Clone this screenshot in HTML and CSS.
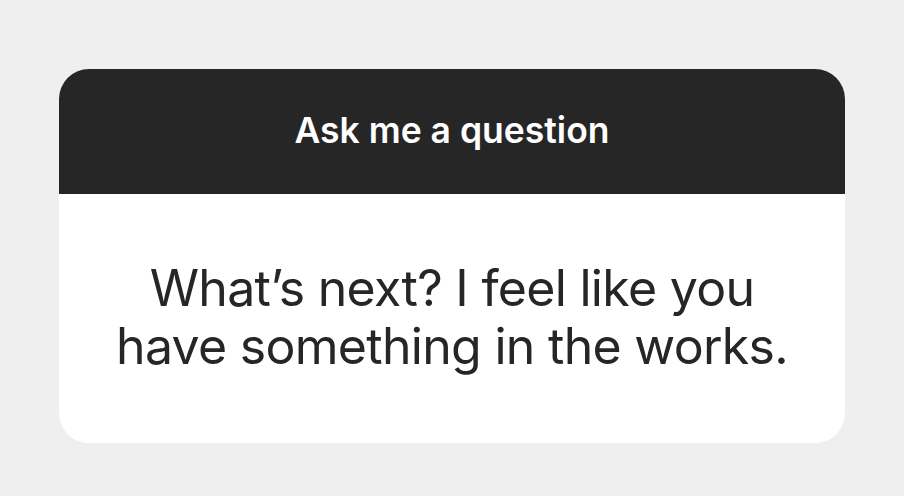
FILE: index.html
```html
<!DOCTYPE html>
<html>
<head>
<meta charset="utf-8">
<link rel="stylesheet" href="styles.css">
</head>
<body>
<div class="page">
  <div class="card">
    <div class="card-header">Ask me a question</div>
    <div class="card-body">What’s next? I feel like you<br>have something in the works.</div>
  </div>
</div>
</body>
</html>
```
FILE: styles.css
```css
html, body {
  margin: 0;
  padding: 0;
  background: #efefef;
  width: 904px;
  height: 496px;
  overflow: hidden;
  font-family: Inter, "Noto Sans", sans-serif;
}
.page {
  padding: 69px 59px 0 59px;
}
.card {
  width: 786px;
  height: 374px;
  border-radius: 30px;
  overflow: hidden;
  background: #ffffff;
  display: flex;
  flex-direction: column;
}
.card-header {
  height: 125px;
  background: #262626;
  color: #ffffff;
  font-size: 35.5px;
  font-weight: 600;
  display: flex;
  align-items: center;
  justify-content: center;
  letter-spacing: 0;
  padding-bottom: 2px;
  box-sizing: border-box;
}
.card-body {
  flex: 1;
  display: flex;
  align-items: center;
  justify-content: center;
  text-align: center;
  color: #262626;
  font-size: 50px;
  line-height: 58px;
  letter-spacing: -0.7px;
  padding-bottom: 4px;
}
```
